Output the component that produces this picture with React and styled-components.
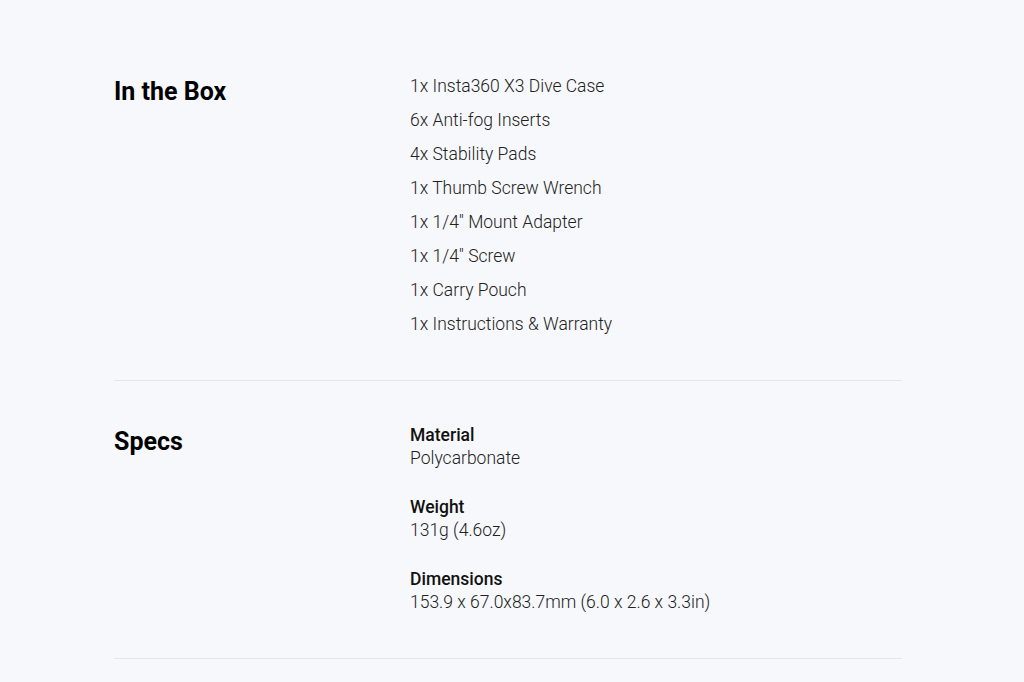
import React from "react";
import styled, { createGlobalStyle } from "styled-components";

const Global = createGlobalStyle`
  html, body { margin: 0; padding: 0; background: #f7f8fb; }
  body { font-family: Roboto, "Noto Sans", Arial, sans-serif; color: #111; -webkit-font-smoothing: antialiased; }
`;

const Page = styled.main`
  width: 788px;
  margin: 0 auto 0 114px;
`;

const Section = styled.section`
  display: grid;
  grid-template-columns: 296px 1fr;
  padding: ${(p) => p.$pad};
  border-bottom: 1px solid #e4e6ea;
`;

const Heading = styled.h2`
  margin: ${(p) => p.$offset}px 0 0;
  font-size: 25px;
  line-height: 34px;
  font-weight: 700;
  color: #000;
`;

const List = styled.ul`
  list-style: none;
  margin: 0;
  padding: 0;
`;

const Item = styled.li`
  font-size: 17.5px;
  line-height: 34px;
  font-weight: 300;
  color: #222;
`;

const Specs = styled.dl`
  margin: 0;
  display: flex;
  flex-direction: column;
  gap: 26px;
`;

const Spec = styled.div``;

const Label = styled.dt`
  font-size: 17.5px;
  line-height: 23px;
  font-weight: 500;
  color: #111;
`;

const Value = styled.dd`
  margin: 0;
  font-size: 17.5px;
  line-height: 23px;
  font-weight: 300;
  color: #222;
`;

const items = [
  "1x Insta360 X3 Dive Case",
  "6x Anti-fog Inserts",
  "4x Stability Pads",
  "1x Thumb Screw Wrench",
  '1x 1/4" Mount Adapter',
  '1x 1/4" Screw',
  "1x Carry Pouch",
  "1x Instructions & Warranty",
];

const specs = [
  ["Material", "Polycarbonate"],
  ["Weight", "131g (4.6oz)"],
  ["Dimensions", "153.9 x 67.0x83.7mm (6.0 x 2.6 x 3.3in)"],
];

export default function App() {
  return (
    <>
      <Global />
      <Page>
        <Section $pad="69px 0 39px">
          <Heading $offset={6}>In the Box</Heading>
          <List>
            {items.map((t) => (
              <Item key={t}>{t}</Item>
            ))}
          </List>
        </Section>
        <Section $pad="43px 0 44px">
          <Heading $offset={1}>Specs</Heading>
          <Specs>
            {specs.map(([l, v]) => (
              <Spec key={l}>
                <Label>{l}</Label>
                <Value>{v}</Value>
              </Spec>
            ))}
          </Specs>
        </Section>
      </Page>
    </>
  );
}
